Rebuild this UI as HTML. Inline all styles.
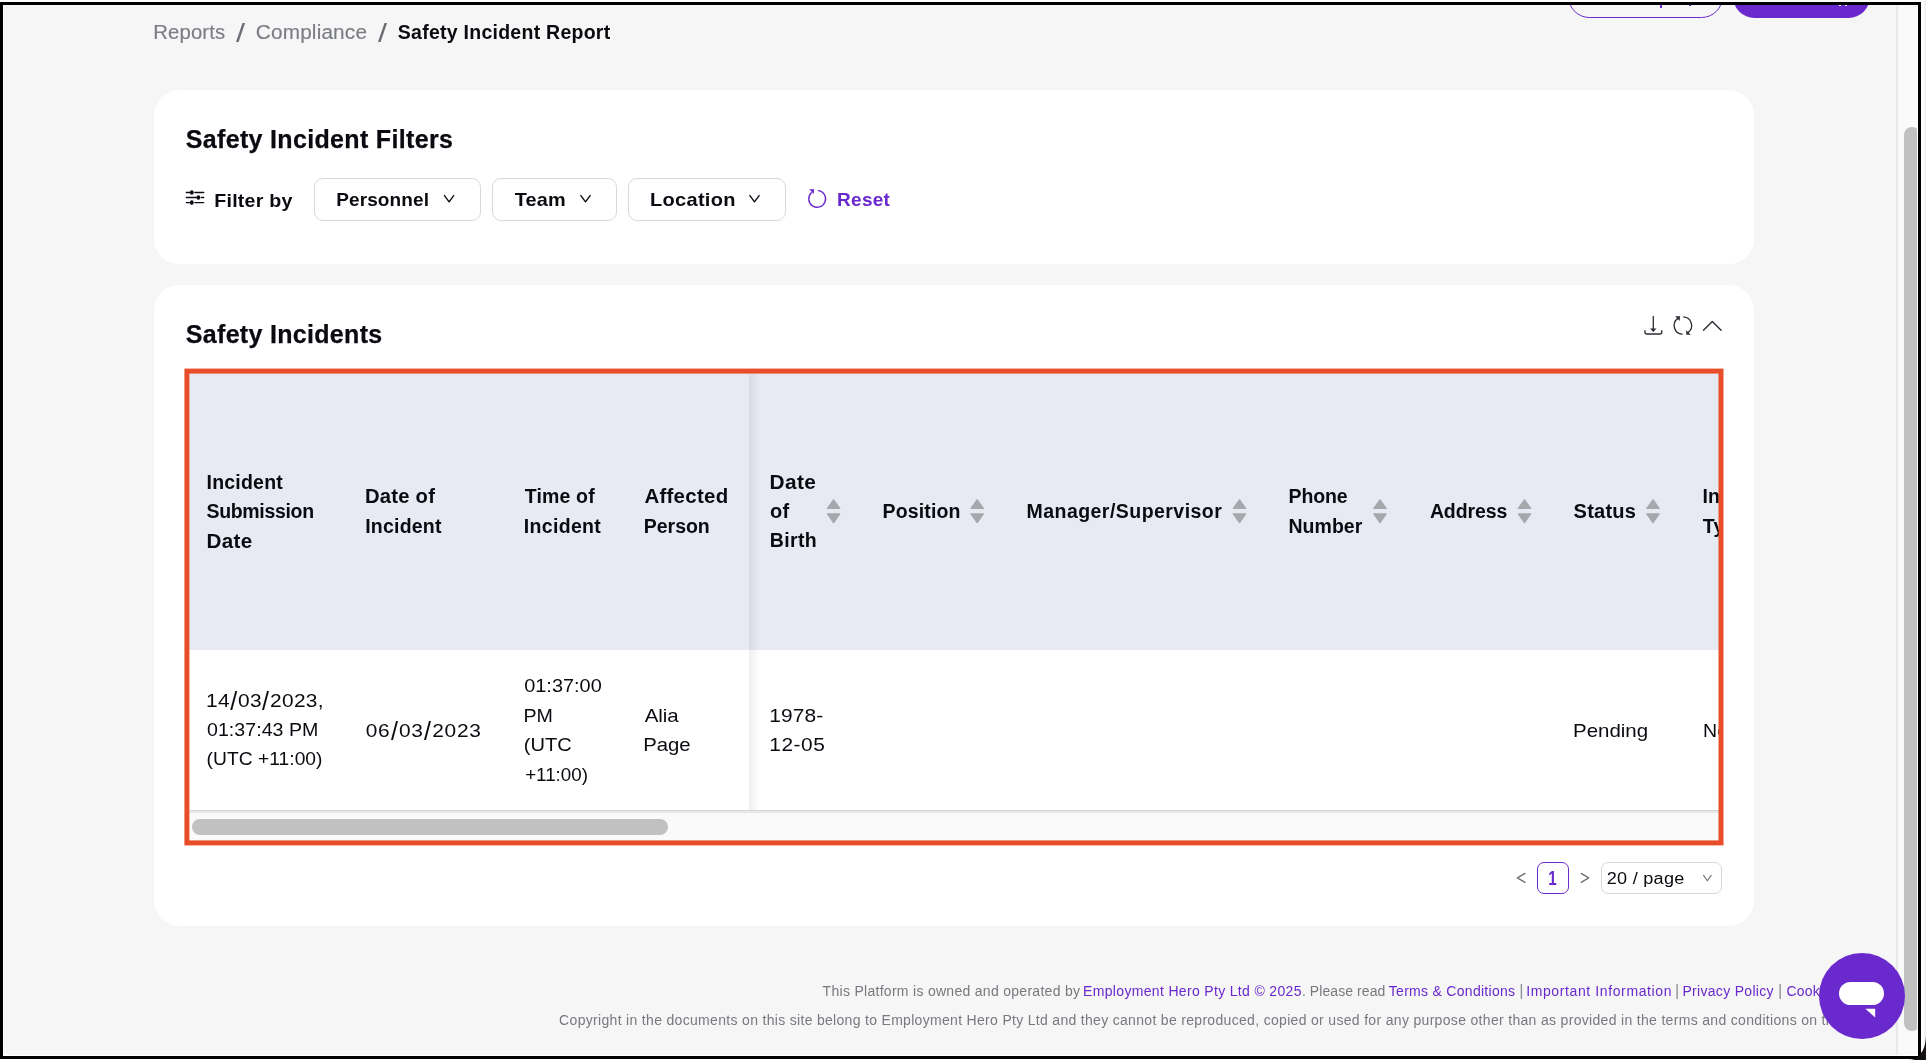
<!DOCTYPE html>
<html lang="en">
<head>
<meta charset="utf-8">
<title>Safety Incident Report</title>
<style>
*{box-sizing:border-box;margin:0;padding:0}
html,body{width:1926px;height:1060px;overflow:hidden;background:#fff}
body{font-family:"Liberation Sans",sans-serif;color:#0a0a10;position:relative}
.abs,.t{position:absolute}
.t{white-space:nowrap;line-height:1}
.b{font-weight:700}
h2.t{-webkit-text-stroke:.25px currentColor}
.t{transform-origin:0 0}
.sl{font-style:normal;display:inline-block;transform:scale(1.2,1.36);transform-origin:50% 35%;margin:0 .9px}
#frame{position:absolute;left:0;top:2px;width:1921px;height:1057px;background:#000}
#inner{position:absolute;left:3px;top:3px;width:1915px;height:1051px;background:#fff;overflow:hidden}
#page{position:absolute;left:1px;top:0;width:1913px;height:1050px;background:#f6f6f6;overflow:hidden}
/* coordinates inside #page are offset by (4,5) from the screenshot */
#stage{position:absolute;left:-4px;top:-5px;width:1926px;height:1060px;will-change:transform}
.card{position:absolute;background:#fff;border-radius:25px}
.btn{position:absolute;border:1px solid #d8d9de;border-radius:9px;background:#fff}
.purple{color:#6a29cd}
.fg{color:#77797f}
.grey{color:#7b7d84;-webkit-text-stroke:.15px currentColor}
.sep{font-size:25px;color:#6d6f76;transform:scaleX(1.3);transform-origin:0 0}
</style>
</head>
<body>
<div id="frame"><div id="inner"><div id="page"><div id="stage">

<!-- top buttons (cut off) -->
<div class="abs" style="left:1568px;top:-25px;width:155px;height:43px;border:1px solid #6a29cd;border-radius:22px"></div>
<div class="abs" style="left:1660px;top:5px;width:2px;height:3px;background:#6a29cd"></div>
<div class="abs" style="left:1689px;top:5px;width:2px;height:1px;background:#6a29cd"></div>
<div class="abs" style="left:1733px;top:-25px;width:137px;height:43px;background:#6a29cd;border-radius:22px"></div>
<div class="abs" style="left:1839px;top:5px;width:2px;height:1px;background:#fff"></div>
<div class="abs" style="left:1845px;top:5px;width:2px;height:1px;background:#fff"></div>

<!-- breadcrumb -->
<nav>
<span class="t grey" style="left:153.1px;top:22.74px;font-size:19.5px;letter-spacing:0.10px;transform:translateX(0.31px) scaleX(1.043)">Reports</span>
<span class="t sep" style="left:236px;top:21px">/</span>
<span class="t grey" style="left:255.4px;top:22.74px;font-size:19.5px;letter-spacing:0.16px;transform:translateX(0.83px) scaleX(1.064)">Compliance</span>
<span class="t sep" style="left:377.5px;top:21px">/</span>
<span class="t b" style="left:397.8px;top:22.74px;font-size:19.5px;letter-spacing:0.26px">Safety Incident Report</span>
</nav>

<!-- filters card -->
<section class="card" style="left:154px;top:90px;width:1600px;height:174px"></section>
<h2 class="t b" style="left:185.8px;top:127.09px;font-size:25px;letter-spacing:0.33px">Safety Incident Filters</h2>
<span class="t b" style="left:214.2px;top:191.17px;font-size:19px;letter-spacing:0.22px;transform:translateX(0.26px) scaleX(1.033)">Filter by</span>
<div class="btn" style="left:314px;top:178px;width:167px;height:43px"></div>
<div class="btn" style="left:492px;top:178px;width:125px;height:43px"></div>
<div class="btn" style="left:628px;top:178px;width:158px;height:43px"></div>
<span class="t b" style="left:336.2px;top:190.17px;font-size:19px;letter-spacing:0.12px">Personnel</span>
<span class="t b" style="left:514.5px;top:190.17px;font-size:19px;letter-spacing:0.21px;transform:translateX(-0.31px) scaleX(1.046)">Team</span>
<span class="t b" style="left:649.6px;top:190.17px;font-size:19px;letter-spacing:0.27px;transform:scaleX(1.054)">Location</span>
<span class="t b purple" style="left:837.1px;top:190.17px;font-size:19px;letter-spacing:0.25px">Reset</span>

<!-- incidents card -->
<section class="card" style="left:154px;top:285px;width:1600px;height:641px"></section>
<h2 class="t b" style="left:185.8px;top:322.09px;font-size:25px;letter-spacing:0.31px">Safety Incidents</h2>

<!-- table -->
<div class="abs" style="left:189px;top:373px;width:1530px;height:277px;background:#e8eaf3"></div>
<div class="abs" style="left:749px;top:374px;width:11px;height:276px;background:linear-gradient(to right,rgba(10,15,40,.07),rgba(10,15,40,0))"></div>
<div class="abs" style="left:749px;top:650px;width:11px;height:160px;background:linear-gradient(to right,rgba(0,0,0,.065),rgba(0,0,0,0))"></div>
<div class="abs" style="left:189px;top:810px;width:1530px;height:1px;background:#d6d9de"></div>
<div class="abs" style="left:189px;top:811px;width:1530px;height:2px;background:#e7e7e7"></div>
<div class="abs" style="left:189px;top:813px;width:1530px;height:28px;background:#fafafa"></div>
<div class="abs" style="left:192px;top:819px;width:476px;height:16px;background:#c1c1c1;border-radius:8px"></div>

<span class="t b" style="left:206.5px;top:472.74px;font-size:19.5px;letter-spacing:0.22px">Incident</span>
<span class="t b" style="left:206.4px;top:501.74px;font-size:19.5px;letter-spacing:-0.33px;transform:translateX(0.13px)">Submission</span>
<span class="t b" style="left:206.6px;top:531.74px;font-size:19.5px;letter-spacing:0.37px;transform:translateX(-0.59px) scaleX(1.058)">Date</span>
<span class="t b" style="left:365.1px;top:486.74px;font-size:19.5px;letter-spacing:0.22px;transform:scaleX(1.037)">Date of</span>
<span class="t b" style="left:365.4px;top:516.74px;font-size:19.5px;letter-spacing:0.23px;transform:translateX(-0.26px)">Incident</span>
<span class="t b" style="left:524.7px;top:486.74px;font-size:19.5px;letter-spacing:0.17px">Time of</span>
<span class="t b" style="left:523.8px;top:516.74px;font-size:19.5px;letter-spacing:0.33px">Incident</span>
<span class="t b" style="left:644.2px;top:486.74px;font-size:19.5px;letter-spacing:0.26px;transform:translateX(0.38px) scaleX(1.049)">Affected</span>
<span class="t b" style="left:643.8px;top:516.74px;font-size:19.5px;letter-spacing:-0.03px">Person</span>
<span class="t b" style="left:769.6px;top:472.74px;font-size:19.5px;letter-spacing:0.38px;transform:translateX(-0.52px) scaleX(1.068)">Date</span>
<span class="t b" style="left:770.2px;top:501.74px;font-size:19.5px;letter-spacing:0.38px;transform:scaleX(1.026)">of</span>
<span class="t b" style="left:769.8px;top:530.74px;font-size:19.5px;letter-spacing:0.34px">Birth</span>
<span class="t b" style="left:882.5px;top:501.74px;font-size:19.5px;letter-spacing:0.16px">Position</span>
<span class="t b" style="left:1026.5px;top:501.74px;font-size:19.5px;letter-spacing:0.46px">Manager/Supervisor</span>
<span class="t b" style="left:1288.5px;top:486.74px;font-size:19.5px;letter-spacing:-0.10px">Phone</span>
<span class="t b" style="left:1288.5px;top:516.74px;font-size:19.5px;letter-spacing:0.03px">Number</span>
<span class="t b" style="left:1429.9px;top:501.74px;font-size:19.5px;letter-spacing:-0.11px">Address</span>
<span class="t b" style="left:1573.6px;top:501.74px;font-size:19.5px;letter-spacing:0.20px;transform:translateX(-0.45px) scaleX(1.029)">Status</span>
<div class="abs" style="left:1700px;top:374px;width:19px;height:436px;overflow:hidden">
<span class="t b" style="left:2.4px;top:112.74px;font-size:19.5px;letter-spacing:0.16px">Incident</span>
<span class="t b" style="left:2.7px;top:142.74px;font-size:19.5px;letter-spacing:0.3px">Type</span>
<span class="t" style="left:2.7px;top:347.6px;font-size:18.5px;letter-spacing:0.22px;transform:scaleX(1.055)">None</span>
</div>

<span class="t" style="left:206.0px;top:691.59px;font-size:18.5px;letter-spacing:0.27px;transform:scaleX(1.13)">14<i class="sl">/</i>03<i class="sl">/</i>2023,</span>
<span class="t" style="left:207.0px;top:720.59px;font-size:18.5px;letter-spacing:0.02px;transform:scaleX(1.06)">01:37:43 PM</span>
<span class="t" style="left:206.6px;top:749.59px;font-size:18.5px;letter-spacing:0.02px;transform:translateX(-0.40px) scaleX(1.04)">(UTC +11:00)</span>
<span class="t" style="left:365.9px;top:721.59px;font-size:18.5px;letter-spacing:0.63px;transform:translateX(-0.23px) scaleX(1.13)">06<i class="sl">/</i>03<i class="sl">/</i>2023</span>
<span class="t" style="left:524.2px;top:676.59px;font-size:18.5px;letter-spacing:0.01px;transform:translateX(0.19px) scaleX(1.076)">01:37:00</span>
<span class="t" style="left:523.3px;top:706.59px;font-size:18.5px;letter-spacing:0.02px;transform:translateX(0.39px) scaleX(1.061)">PM</span>
<span class="t" style="left:523.6px;top:735.59px;font-size:18.5px;letter-spacing:0.03px;transform:translateX(-0.29px) scaleX(1.085)">(UTC</span>
<span class="t" style="left:525.1px;top:765.59px;font-size:18.5px;letter-spacing:-0.02px;transform:translateX(0.14px) scaleX(1.017)">+11:00)</span>
<span class="t" style="left:644.7px;top:706.59px;font-size:18.5px;letter-spacing:-0.10px;transform:translateX(-0.22px) scaleX(1.106)">Alia</span>
<span class="t" style="left:643.3px;top:735.59px;font-size:18.5px;letter-spacing:-0.10px;transform:translateX(0.36px) scaleX(1.098)">Page</span>
<span class="t" style="left:769.2px;top:706.59px;font-size:18.5px;letter-spacing:0.10px;transform:translateX(0.35px) scaleX(1.13)">1978-</span>
<span class="t" style="left:769.5px;top:735.59px;font-size:18.5px;letter-spacing:0.44px;transform:translateX(-0.66px) scaleX(1.13)">12-05</span>
<span class="t" style="left:1572.6px;top:721.59px;font-size:18.5px;letter-spacing:0.00px;transform:scaleX(1.106)">Pending</span>

<!-- pagination -->
<div class="abs" style="left:1537px;top:862px;width:32px;height:32px;border:1px solid #6a29cd;border-radius:7px;background:#fff"></div>
<span class="t b purple" style="left:1547.2px;top:868.7px;font-size:19.5px;transform:scaleX(.78);transform-origin:50% 50%">1</span>
<div class="abs" style="left:1601px;top:862px;width:121px;height:32px;border:1px solid #d8d9de;border-radius:7px;background:#fff"></div>
<span class="t" style="left:1606.3px;top:870.71px;font-size:16px;letter-spacing:0.24px;transform:translateX(0.75px) scaleX(1.13)">20 / page</span>

<!-- footer -->
<footer>
<span class="t fg" style="left:822.6px;top:984.40px;font-size:14px;letter-spacing:0.29px">This Platform is owned and operated by</span>
<a class="t purple" style="left:1083.1px;top:984.40px;font-size:14px;letter-spacing:0.33px">Employment Hero Pty Ltd © 2025</a>
<span class="t fg" style="left:1301.9px;top:984.40px;font-size:14px;letter-spacing:0.08px">. Please read</span>
<a class="t purple" style="left:1388.8px;top:984.40px;font-size:14px;letter-spacing:0.29px">Terms &amp; Conditions</a>
<span class="t fg" style="left:1519.3px;top:981.5px;font-size:16.5px;color:#8e9095">|</span>
<a class="t purple" style="left:1526.2px;top:984.40px;font-size:14px;letter-spacing:0.61px">Important Information</a>
<span class="t fg" style="left:1674.9px;top:981.5px;font-size:16.5px;color:#8e9095">|</span>
<a class="t purple" style="left:1682.4px;top:984.40px;font-size:14px;letter-spacing:0.31px">Privacy Policy</a>
<span class="t fg" style="left:1778.1px;top:981.5px;font-size:16.5px;color:#8e9095">|</span>
<a class="t purple" style="left:1786.4px;top:984.40px;font-size:14px;letter-spacing:0.2px">Cookie Policy</a>
<span class="t fg" style="left:559.1px;top:1013.40px;font-size:14px;letter-spacing:0.32px">Copyright in the documents on this site</span>
<span class="t fg" style="left:816.9px;top:1013.40px;font-size:14px;letter-spacing:0.31px">belong to Employment Hero Pty Ltd and they cannot be</span>
<span class="t fg" style="left:1181.2px;top:1013.40px;font-size:14px;letter-spacing:0.32px">reproduced, copied or used for any purpose other than as provided in the terms and conditions on this site.</span>
</footer>

<!-- page scrollbar -->
<div class="abs" style="left:1896px;top:0;width:22px;height:1060px;background:#fafafa;border-left:2px solid #e9e9e9"></div>
<div class="abs" style="left:1904px;top:127px;width:16px;height:904px;background:#c1c1c1;border-radius:8px"></div>

<!-- chat bubble -->
<div class="abs" style="left:1819px;top:953px;width:86px;height:86px;border-radius:50%;background:#6a29cd"></div>
<div class="abs" style="left:1839px;top:982px;width:45px;height:23px;border-radius:12px;background:#fff"></div>

<!-- icons -->
<svg class="abs" style="left:0;top:0" width="1926" height="1060" viewBox="0 0 1926 1060" fill="none">
<!-- filter sliders -->
<g stroke="#0c0c17" stroke-width="1.35" stroke-linecap="round">
<path d="M186.3 192.5H190M194.9 192.5H203.7M186.3 197.5H196.5M201.3 197.5H203.7M186.3 202.6H190M194.9 202.6H203.7"/>
</g>
<g fill="#0c0c17"><ellipse cx="191.8" cy="192.5" rx="1.9" ry="2.3"/><ellipse cx="198.4" cy="197.5" rx="1.9" ry="2.3"/><ellipse cx="191.8" cy="202.6" rx="1.9" ry="2.3"/></g>
<!-- dropdown chevrons -->
<g stroke="#0c0c17" stroke-width="1.4" stroke-linecap="round" stroke-linejoin="round">
<path d="M444.5 195.6L449.1 201.8L453.7 195.6"/>
<path d="M580.9 195.6L585.5 201.8L590.1 195.6"/>
<path d="M749.9 195.6L754.5 201.8L759.1 195.6"/>
</g>
<!-- reset -->
<path d="M818.6 190.6A8.4 8.4 0 1 1 811.4 192.8" stroke="#6a29cd" stroke-width="1.4" stroke-linecap="round"/>
<polygon points="809.2,189.2 814.1,189.2 813.8,194" fill="#6a29cd"/>
<!-- card actions -->
<g stroke="#2c2c35" stroke-width="1.3" stroke-linecap="round" stroke-linejoin="round">
<path d="M1653.3 316.4V330.5"/>
<path d="M1644.9 330.6V332A2 2 0 0 0 1646.9 334H1659.8A2 2 0 0 0 1661.8 332V330.6"/>
<path d="M1682.1 334.2A8.7 8.7 0 0 1 1677.9 318.4"/>
<path d="M1683.7 316.8A8.7 8.7 0 0 1 1687.9 332.6"/>
<path d="M1703.5 330.2L1712.3 321.4L1721.1 330.2" stroke-width="1.4"/>
</g>
<g fill="#2c2c35">
<polygon points="1650.1,328.4 1656.5,328.4 1653.3,332"/>
<polygon points="1675.1,316.3 1680,316.3 1679.7,321"/>
<polygon points="1686,330.2 1686.4,334.7 1690.8,334.7"/>
</g>
<!-- sort arrows -->
<g fill="#a6a8ad" stroke="#a6a8ad" stroke-width="1.4" stroke-linejoin="round">
<polygon points="833.6,499.9 827.5,508.4 839.7,508.4"/><polygon points="833.6,522.5 827.5,513.9 839.7,513.9"/>
<polygon points="977.2,499.9 971.1,508.4 983.3,508.4"/><polygon points="977.2,522.5 971.1,513.9 983.3,513.9"/>
<polygon points="1239.5,499.9 1233.4,508.4 1245.6,508.4"/><polygon points="1239.5,522.5 1233.4,513.9 1245.6,513.9"/>
<polygon points="1380,499.9 1373.9,508.4 1386.1,508.4"/><polygon points="1380,522.5 1373.9,513.9 1386.1,513.9"/>
<polygon points="1524.5,499.9 1518.4,508.4 1530.6,508.4"/><polygon points="1524.5,522.5 1518.4,513.9 1530.6,513.9"/>
<polygon points="1653,499.9 1646.9,508.4 1659.1,508.4"/><polygon points="1653,522.5 1646.9,513.9 1659.1,513.9"/>
</g>
<!-- pagination arrows -->
<g stroke="#6d6f76" stroke-width="1.3" stroke-linecap="round" stroke-linejoin="round">
<path d="M1525 873.4L1517.4 877.9L1525 882.4"/>
<path d="M1581.2 873.4L1588.7 877.9L1581.2 882.4"/>
<path d="M1703.6 875.4L1707.4 880.7L1711.2 875.4" stroke-width="1.1"/>
</g>
<!-- red highlight frame -->
<rect x="186.9" y="371.1" width="1534.1" height="471.8" stroke="#e94e2a" stroke-width="5"/>
<!-- chat tail -->
<polygon points="1865.4,1008.8 1875.2,1008.8 1875.2,1017.5" fill="#fff"/>
</svg>

</div></div></div></div>
<div class="abs" style="left:1923px;top:0;width:3px;height:1060px;background:linear-gradient(to right,#fff,#ececec)"></div>
<svg class="abs" style="left:1896px;top:1030px" width="30" height="30" viewBox="1896 1030 30 30"><path d="M1926 1035.5C1925.6 1044.5 1923.8 1049.8 1921 1053L1917.5 1057.4C1915.5 1058.8 1913 1059.5 1909 1060H1926Z" fill="#151113"/></svg>
</body>
</html>
